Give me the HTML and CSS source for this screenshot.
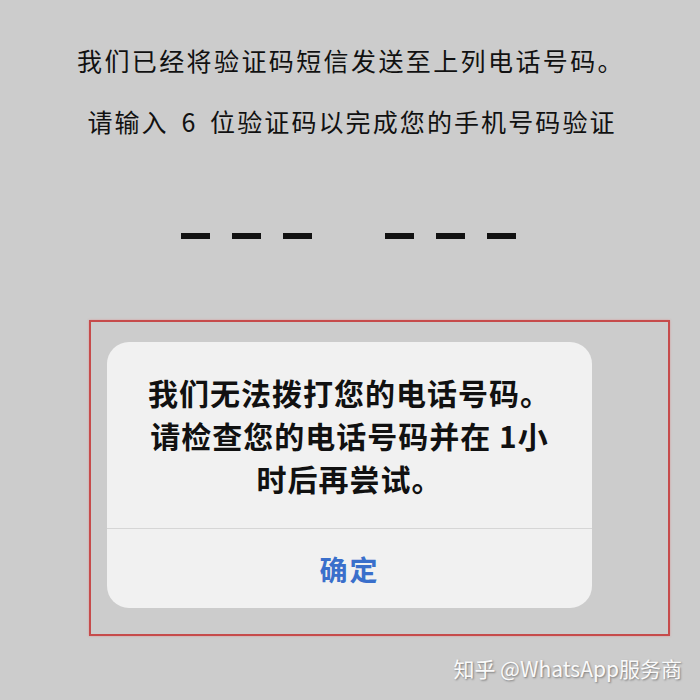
FILE: index.html
```html
<!DOCTYPE html>
<html lang="zh-CN">
<head>
<meta charset="utf-8">
<title>验证码</title>
<link rel="stylesheet" href="styles.css">
</head>
<body>
<div class="screen">
  <p class="info">我们已经将验证码短信发送至上列电话号码。</p>
  <p class="hint">请输入 6 位验证码以完成您的手机号码验证</p>
  <div class="code">
    <div class="code-group">
      <span class="slot"></span><span class="slot"></span><span class="slot"></span>
    </div>
    <div class="code-group">
      <span class="slot"></span><span class="slot"></span><span class="slot"></span>
    </div>
  </div>
  <div class="frame">
    <div class="alert">
      <div class="alert-msg">我们无法拨打您的电话号码。<br>请检查您的电话号码并在 1小<br>时后再尝试。</div>
      <div class="alert-btn">确定</div>
    </div>
  </div>
  <div class="mark">知乎 @WhatsApp服务商</div>
</div>
</body>
</html>
```

FILE: styles.css
```css
html, body {
  margin: 0;
  padding: 0;
  background: #cccccc;
}

.screen {
  width: 700px;
  height: 700px;
  overflow: hidden;
  display: flex;
  flex-direction: column;
  font-family: "Noto Sans CJK SC", "Noto Sans", sans-serif;
  color: #111;
}

.info {
  margin: 42px 0 0;
  text-align: center;
  font-size: 25px;
  line-height: 36px;
  letter-spacing: 2.4px;
  padding-left: 2px;
}

.hint {
  margin: 25px 0 0;
  text-align: center;
  font-size: 25px;
  line-height: 36px;
  letter-spacing: 2.1px;
  word-spacing: 5px;
  padding-left: 4px;
}

.code {
  margin-top: 94px;
  display: flex;
  justify-content: center;
  gap: 73px;
  padding-right: 4px;
}

.code-group {
  display: flex;
  gap: 22px;
}

.slot {
  width: 29px;
  height: 6px;
  background: #111;
}

.frame {
  margin: 81px 0 0 89px;
  width: 577px;
  height: 292px;
  border: 2px solid #c64b4b;
  box-shadow: 0 0 2px rgba(230, 120, 120, 0.6);
  padding-top: 20px;
}

.alert {
  margin-left: 16px;
  width: 485px;
  height: 266px;
  background: #f1f1f1;
  border-radius: 22px;
  display: flex;
  flex-direction: column;
}

.alert-msg {
  height: 186px;
  box-sizing: border-box;
  padding-top: 29px;
  text-align: center;
  font-size: 30px;
  line-height: 43px;
  font-weight: 700;
  color: #111;
  letter-spacing: 1px;
}

.alert-btn {
  flex: 1;
  border-top: 1px solid #d6d6d6;
  display: flex;
  align-items: center;
  justify-content: center;
  font-size: 28px;
  font-weight: 700;
  color: #3a6fcb;
  letter-spacing: 2px;
}

.mark {
  margin-top: 20px;
  align-self: flex-end;
  padding-right: 18px;
  font-size: 21px;
  line-height: 24px;
  color: #fafafa;
  text-shadow: 1px 1px 2px rgba(0, 0, 0, 0.4);
}
```
